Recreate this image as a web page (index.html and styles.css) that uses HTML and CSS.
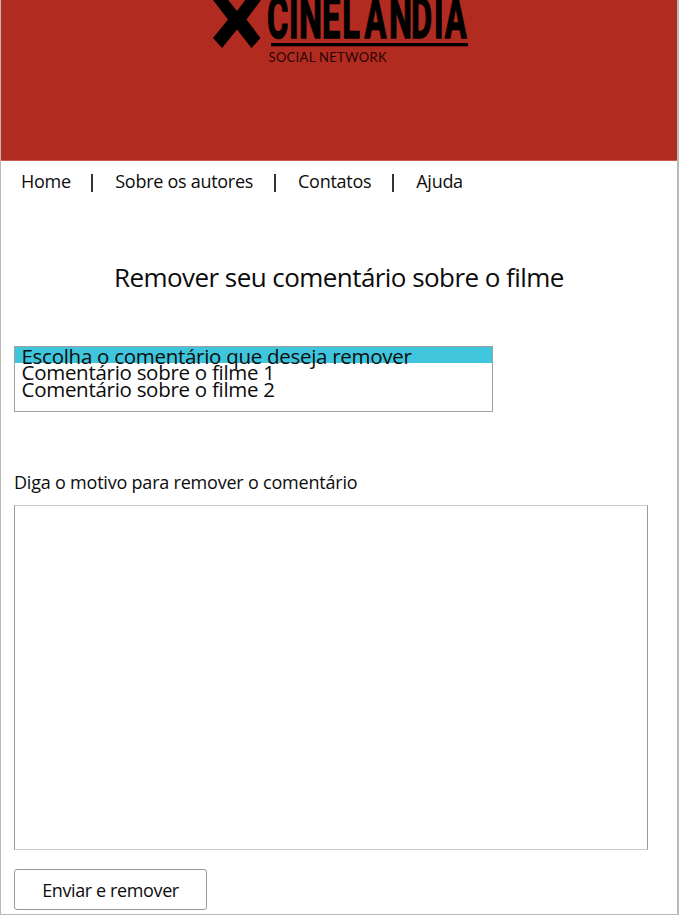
FILE: index.html
```html
<!DOCTYPE html>
<html lang="pt">
<head>
<meta charset="utf-8">
<title>Cinelandia</title>
<link rel="stylesheet" href="styles.css">
</head>
<body>
<div class="page">
  <header class="banner">
    <svg class="logo" width="260" height="70" viewBox="210 0 260 70">
      <path d="M221-9L237 11 252-9 261 0 246.500 19.500 260.500 38 251.500 48 237 29.500 222 48 213 38 228 19.500 213 0Z"/>
      <g transform="scale(.56 1)">
        <text class="brand" y="38" x="477 516 534 575 611 651 694.500 734 775 794">CINELANDIA</text>
      </g>
      <rect x="271" y="43" width="197" height="3.300"/>
      <text class="tagline" x="268.500" y="62" textLength="118">SOCIAL NETWORK</text>
    </svg>
  </header>
  <nav class="menu">
    <a class="home">Home</a><i></i><a class="authors">Sobre os autores</a><i></i><a class="contacts">Contatos</a><i></i><a>Ajuda</a>
  </nav>
  <main>
    <h1>Remover seu comentário sobre o filme</h1>
    <ul class="list">
      <li class="selected">Escolha o comentário que deseja remover</li>
      <li>Comentário sobre o filme 1</li>
      <li>Comentário sobre o filme 2</li>
    </ul>
    <p class="label"><span>Diga o motivo para remover o comentário</span></p>
    <div class="reason"></div>
    <button><span>Enviar e remover</span></button>
  </main>
</div>
</body>
</html>
```
FILE: styles.css
```css
* { box-sizing: border-box; }
body { margin: 0; background: #fff; color: #0c0c0c; font-family: "Open Sans", "Noto Sans", sans-serif; }
.page { height: 915px; overflow: hidden; border: solid #b9b9b9; border-width: 0 2px 1px 1px; }
.banner { height: 161px; background: #b22b20; border-bottom: 1px solid #cb5c54; }
.logo { display: block; margin-left: 209px; }
.brand { font: 700 58px Roboto, sans-serif; stroke: #000; stroke-width: 1.500px; }
.tagline { font: 400 13px Lato, sans-serif; fill: #250604; }
.menu { display: flex; align-items: center; height: 42px; padding: 0 0 2px 20px; font-size: 18px; line-height: 24px; letter-spacing: -.28px; }
.menu a { white-space: nowrap; }
.menu i { width: 2px; height: 18px; margin: 4px 22px 0 21px; background: #333; }
.menu .home { margin-right: -.5px; }
main { padding-left: 13px; }
h1 { margin: 56px 0 0; padding-left: 100px; font-size: 26px; font-weight: 400; line-height: 36px; letter-spacing: -.56px; white-space: nowrap; }
.list { list-style: none; width: 479px; height: 66px; margin: 51px 0 0; padding: 0; border: 1px solid #a0a0a0; font-size: 20.500px; line-height: 19px; letter-spacing: -.28px; white-space: nowrap; }
.list li { height: 16.300px; padding-left: 6.500px; }
.selected { background: #40c6dc; }
.label { margin: 58px 0 0; height: 35px; font-size: 18px; line-height: 25px; letter-spacing: -.21px; white-space: nowrap; }
.reason { width: 634px; height: 345px; border: 1px solid #999; border-top-color: #ccc; border-bottom-color: #ccc; }
button { display: block; width: 193px; height: 41px; margin: 19px 0 0; padding: 1px 0 0; border: 1px solid #999; border-radius: 3px; background: #fff; color: #0c0c0c; font: 18px "Open Sans", "Noto Sans", sans-serif; letter-spacing: -.38px; white-space: nowrap; }
```
